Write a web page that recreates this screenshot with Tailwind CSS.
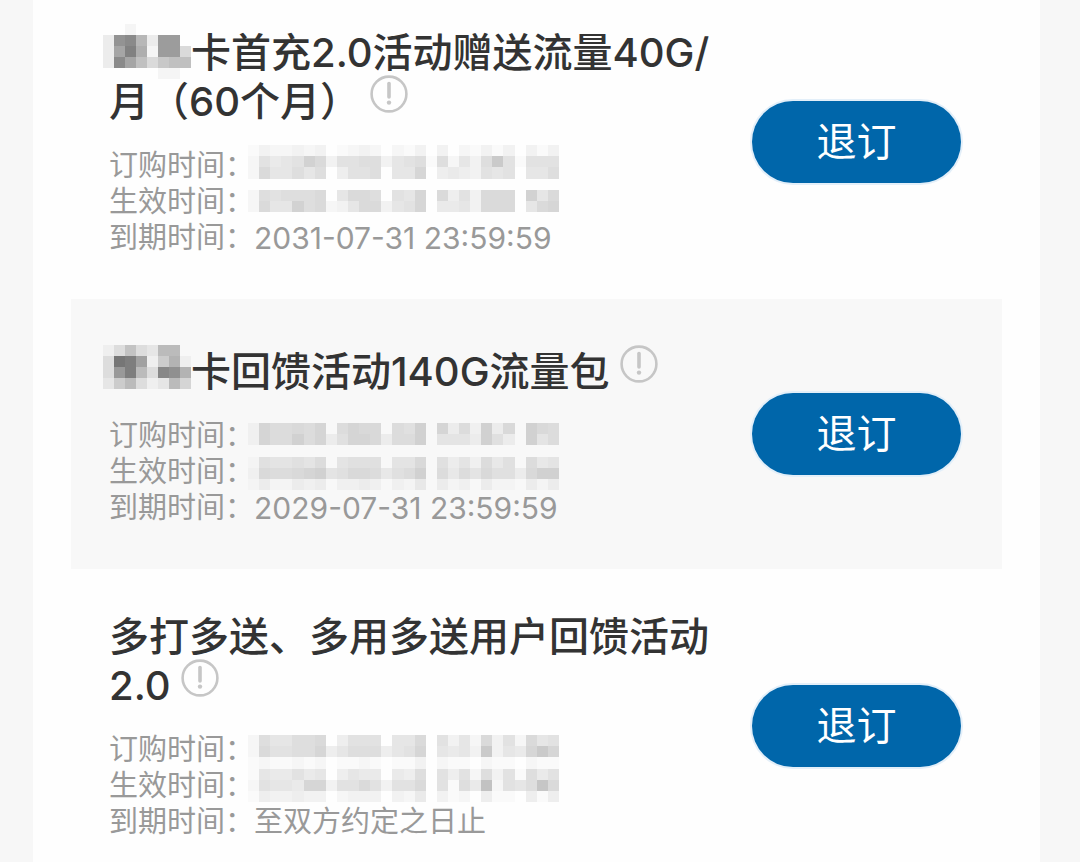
<!DOCTYPE html>
<html lang="zh-CN">
<head>
    <meta charset="UTF-8">
    <meta name="viewport" content="width=device-width, initial-scale=1.0">
    <title>已订业务</title>
    <script src="https://cdn.jsdelivr.net/npm/@tailwindcss/browser@4"></script>
</head>
<body class="bg-[#f7f7f7] overflow-hidden font-['Inter','Noto_Sans_CJK_SC',sans-serif]">
    <svg class="hidden">
        <symbol id="info" viewBox="0 0 38 38">
            <circle cx="19" cy="19" r="17.4" fill="none" stroke="#c6c6c6" stroke-width="2.6"/>
            <path d="M19 8.5v13.5" stroke="#c6c6c6" stroke-width="3.6" stroke-linecap="round"/>
            <circle cx="19" cy="27.6" r="2.2" fill="#c6c6c6"/>
        </symbol>
    </svg>

    <main class="bg-[#fefefe] -mt-[15px] ml-[33px] mr-10 px-[38px]">
        <!-- Plan 1 -->
        <section class="flex items-center gap-[22px] pl-[38px] pr-[41px] pt-[43px] pb-[43px]">
            <div class="flex-1 min-w-0">
                <h2 class="text-[40px] leading-[49px] font-medium text-[#333]"><svg class="mosaic inline-block align-top w-[88px] h-[55px] -mt-[4px] -mb-[10px] -ml-[6px]" data-alpha="0.035" data-rows="00100000 2cd82bb0 2ae91bb4 2da74677 00000110"></svg>卡首充2.0活动赠送流量40G/月（60个月）<button type="button" aria-label="说明" class="inline-block align-top -mt-[2px] ml-[10px]"><svg class="size-[38px]"><use href="#info"/></svg></button></h2>
                <dl class="relative mt-[22px] text-[29px] leading-[36px] text-[#999]">
                    <div class="flex"><dt>订购时间：</dt></div>
                    <div class="flex"><dt>生效时间：</dt></div>
                    <div class="flex"><dt>到期时间：</dt><dd class="text-[30px]">2031-07-31 23:59:59</dd></div>
                    <svg class="mosaic absolute left-[139px] -top-[3px] w-[311px] h-[67px]" data-alpha="0.0157" data-rows="1322323012320213030213130313 27567b9377883678182638d71777 296686804778066a045437670668 0000000000000000000000000000 287888906998076a094739990b69 2966b8923699367a05563999069a"></svg>
                </dl>
            </div>
            <button type="button" class="w-[209px] h-[82px] rounded-full bg-[#0066aa] text-[40px] leading-[48px] text-white ring-2 ring-[#e3eff9]">退订</button>
        </section>

        <!-- Plan 2 -->
        <section class="flex items-center gap-[22px] pl-[38px] pr-[41px] pt-[43px] pb-[43px] bg-[#f8f8f8]">
            <div class="flex-1 min-w-0 pt-[5px]">
                <h2 class="text-[40px] leading-[49px] font-medium text-[#333]"><svg class="mosaic inline-block align-top w-[88px] h-[55px] -mt-[2px] -mb-[10px] -ml-[6px]" data-alpha="0.035" data-rows="13632770 3fea1581 3be73dc8 25731274 00000000"></svg>卡回馈活动140G流量包<button type="button" aria-label="说明" class="inline-block align-top -mt-[2px] ml-[10px]"><svg class="size-[38px]"><use href="#info"/></svg></button></h2>
                <dl class="relative mt-[22px] text-[29px] leading-[36px] text-[#999]">
                    <div class="flex"><dt>订购时间：</dt></div>
                    <div class="flex"><dt>生效时间：</dt></div>
                    <div class="flex"><dt>到期时间：</dt><dd class="text-[30px]">2029-07-31 23:59:59</dd></div>
                    <svg class="mosaic absolute left-[139px] top-[5px] w-[311px] h-[67px]" data-alpha="0.0157" data-rows="297787907988076a09372a380a87 2977a7936998377a05553a630a57 0000000000000000000000000000 1655657056660558063527460745 287789a56887467a0747586638aa 1311323022320214031203110313"></svg>
                </dl>
            </div>
            <button type="button" class="w-[209px] h-[82px] rounded-full bg-[#0066aa] text-[40px] leading-[48px] text-white ring-2 ring-[#e3eff9]">退订</button>
        </section>

        <!-- Plan 3 -->
        <section class="flex items-center gap-[22px] pl-[38px] pr-[41px] pt-[43px] pb-[43px]">
            <div class="flex-1 min-w-0">
                <h2 class="text-[40px] leading-[49px] font-medium text-[#333]">多打多送、多用多送用户回馈活动<wbr>2.0<button type="button" aria-label="说明" class="inline-block align-top -mt-[2px] ml-[10px]"><svg class="size-[38px]"><use href="#info"/></svg></button></h2>
                <dl class="relative mt-[22px] text-[29px] leading-[36px] text-[#999]">
                    <div class="flex"><dt>订购时间：</dt></div>
                    <div class="flex"><dt>生效时间：</dt></div>
                    <div class="flex"><dt>到期时间：</dt><dd>至双方约定之日止</dd></div>
                    <svg class="mosaic absolute left-[139px] top-[3px] w-[311px] h-[67px]" data-alpha="0.0157" data-rows="2866889047770669073629372967 297788a46888467a06563d365ada 1211212011210113021102110211 1655756046550548074728371857 27665aa37797377907185f2768e9 1433433023330325031204110414"></svg>
                </dl>
            </div>
            <button type="button" class="w-[209px] h-[82px] rounded-full bg-[#0066aa] text-[40px] leading-[48px] text-white ring-2 ring-[#e3eff9]">退订</button>
        </section>
    </main>

    <script>
    // Each hex digit in data-rows is the darkness of one mosaic cell
    document.querySelectorAll('.mosaic').forEach(function(svg) {
        const rows = svg.dataset.rows.split(' ');
        const alpha = Number(svg.dataset.alpha);

        svg.setAttribute('viewBox', `0 0 ${rows[0].length} ${rows.length}`);
        svg.setAttribute('preserveAspectRatio', 'none');
        svg.setAttribute('shape-rendering', 'crispEdges');
        svg.setAttribute('aria-hidden', 'true');

        rows.forEach(function(row, y) {
            [...row].forEach(function(digit, x) {
                const rect = document.createElementNS('http://www.w3.org/2000/svg', 'rect');
                rect.setAttribute('x', x);
                rect.setAttribute('y', y);
                rect.setAttribute('width', 1);
                rect.setAttribute('height', 1);
                rect.setAttribute('fill-opacity', parseInt(digit, 16) * alpha);
                svg.appendChild(rect);
            });
        });
    });
    </script>
</body>
</html>
